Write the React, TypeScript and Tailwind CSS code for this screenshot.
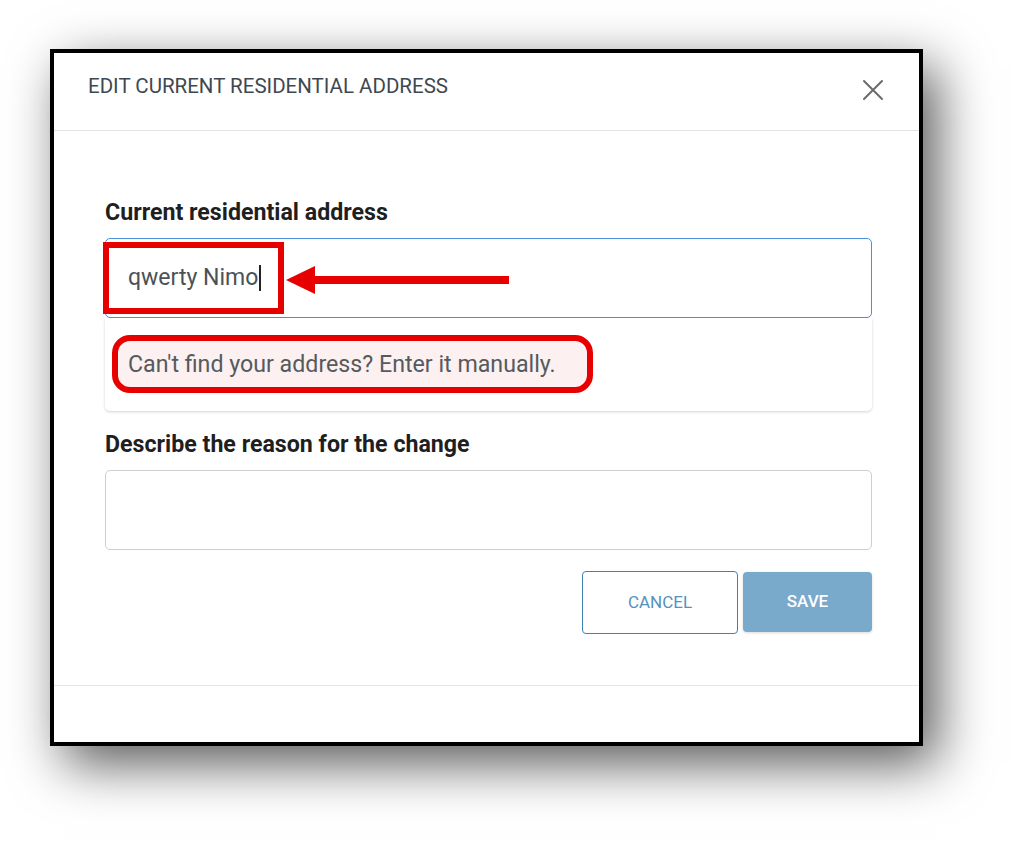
import React from "react";

export default function App() {
  return (
    <div className="w-[1024px] h-[846px] bg-white overflow-hidden pt-[49px] pl-[50px]" style={{ fontFamily: "Roboto, 'Noto Sans', sans-serif" }}>
      <div className="w-[873px] h-[697px] border-4 border-black bg-white flex flex-col shadow-[14px_18px_50px_rgba(0,0,0,0.65)]">
        {/* Header */}
        <div className="h-[78px] shrink-0 border-b border-[#e3e3e3] flex items-center justify-between pl-[34px] pr-[34px] pb-[10px]">
          <div className="text-[20.5px] text-[#3f4850] uppercase">Edit current residential address</div>
          <svg width="24" height="24" viewBox="0 0 24 24" className="mt-[6px]">
            <path d="M3 3 L21 21 M21 3 L3 21" stroke="#6b6b6b" strokeWidth="2" fill="none" strokeLinecap="round" />
          </svg>
        </div>

        {/* Body */}
        <div className="flex-1 flex flex-col pl-[51px] pr-[47px]">
          <div className="mt-[67px] text-[23.2px] leading-[28px] font-bold text-[#1f1f1f]">Current residential address</div>

          <div className="relative mt-[12px] h-[80px] border border-[#4a90d9] rounded-[5px] flex items-center pl-[22px]">
            <span className="text-[23px] text-[#4b5257]">qwerty Nimo</span>
            <span className="ml-[1px] w-[1.5px] h-[26px] bg-[#222]" />
            {/* red annotation box */}
            <div className="absolute left-[-3px] top-[3px] w-[181px] h-[72px] border-[6px] border-[#e60000]" />
            {/* arrow */}
            <svg className="absolute left-[180px] top-[26px]" width="225" height="30" viewBox="0 0 225 30">
              <polygon points="0,15 29,1 29,29" fill="#e60000" />
              <rect x="28" y="11" width="195" height="8" fill="#e60000" />
            </svg>
          </div>

          {/* dropdown panel */}
          <div className="h-[93px] rounded-b-[5px] bg-white shadow-[0_1px_3px_rgba(0,0,0,0.18)] pt-[17px] pl-[7px]">
            <div className="w-[481px] h-[58px] rounded-[18px] border-[6px] border-[#e60000] bg-[#fdf0f0] flex items-center pl-[10px]">
              <span className="text-[23.2px] text-[#555a5e]">Can't find your address? Enter it manually.</span>
            </div>
          </div>

          <div className="mt-[19px] text-[23.2px] leading-[28px] font-bold text-[#1f1f1f]">Describe the reason for the change</div>

          <div className="mt-[12px] h-[80px] border border-[#cfcfcf] rounded-[5px]" />

          <div className="mt-[21px] flex justify-end gap-[5px]">
            <button className="w-[156px] h-[63px] border-[1.5px] border-[#3d82b3] rounded-[4px] bg-white text-[17px] text-[#5591bd] uppercase">Cancel</button>
            <button className="w-[129px] h-[60px] mt-[1px] rounded-[4px] bg-[#79aacb] text-[17px] font-medium text-white uppercase shadow-[0_1px_3px_rgba(0,0,0,0.15)]">Save</button>
          </div>

          <div className="flex-1" />
        </div>

        {/* Footer */}
        <div className="h-[57px] shrink-0 border-t border-[#e6e6e6]" />
      </div>
    </div>
  );
}
